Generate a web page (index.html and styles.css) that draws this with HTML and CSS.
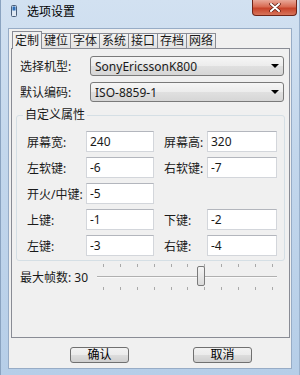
FILE: index.html
```html
<!DOCTYPE html>
<html lang="zh-CN">
<head>
    <meta charset="UTF-8">
    <title>选项设置</title>
    <link rel="stylesheet" href="styles.css">
</head>
<body>
    <div class="window">
        <div class="titlebar">
            <svg class="app-icon" width="6" height="12" viewBox="0 0 6 12">
                <rect x="0.5" y="0.5" width="5" height="11" rx="1" fill="#dfe8f2" stroke="#4a5f7a"/>
                <rect x="1.5" y="1.5" width="3" height="4" fill="#2f6fb8"/>
            </svg>
            <span class="title">选项设置</span>
            <div class="close">
                <svg width="12" height="9" viewBox="0 0 12 9">
                    <path d="M2 1 L10 8 M10 1 L2 8" stroke="#5a1a10" stroke-width="3.4" stroke-linecap="round"/>
                    <path d="M2 1 L10 8 M10 1 L2 8" stroke="#fff" stroke-width="2" stroke-linecap="round"/>
                </svg>
            </div>
        </div>

        <div class="client">
            <div class="tabs">
                <div class="tab active">定制</div>
                <div class="tab">键位</div>
                <div class="tab">字体</div>
                <div class="tab">系统</div>
                <div class="tab">接口</div>
                <div class="tab">存档</div>
                <div class="tab">网络</div>
            </div>

            <div class="panel">
                <div class="form-row">
                    <label>选择机型:</label>
                    <div class="combo"><span>SonyEricssonK800</span><i class="arrow"></i></div>
                </div>
                <div class="form-row">
                    <label>默认编码:</label>
                    <div class="combo"><span>ISO-8859-1</span><i class="arrow"></i></div>
                </div>

                <fieldset class="group">
                    <legend>自定义属性</legend>
                    <div class="grid">
                        <label>屏幕宽:</label><input type="text" value="240">
                        <label class="lbl2">屏幕高:</label><input type="text" value="320">

                        <label>左软键:</label><input type="text" value="-6">
                        <label class="lbl2">右软键:</label><input type="text" value="-7">

                        <label>开火/中键:</label><input type="text" value="-5">
                        <span></span><span></span>

                        <label>上键:</label><input type="text" value="-1">
                        <label class="lbl2">下键:</label><input type="text" value="-2">

                        <label>左键:</label><input type="text" value="-3">
                        <label class="lbl2">右键:</label><input type="text" value="-4">
                    </div>
                </fieldset>

                <div class="slider-row">
                    <label>最大帧数: 30</label>
                    <div class="slider">
                        <div class="ticks"><i></i><i></i><i></i><i></i><i></i><i></i><i></i><i></i><i></i><i></i><i></i></div>
                        <div class="track"></div>
                        <div class="ticks"><i></i><i></i><i></i><i></i><i></i><i></i><i></i><i></i><i></i><i></i><i></i></div>
                        <div class="thumb"></div>
                    </div>
                </div>
            </div>

            <div class="buttons">
                <button>确认</button>
                <button>取消</button>
            </div>
        </div>
    </div>
</body>
</html>
```

FILE: styles.css
```css
body {
    margin: 0;
    font-family: "Noto Sans", "Noto Sans CJK SC", sans-serif;
    font-size: 12px;
    color: #1a1a1a;
}
.window {
    width: 300px;
    height: 375px;
    box-sizing: border-box;
    background: linear-gradient(to bottom, #d2e1f1 0%, #c3d7ec 40%, #b6cee8 100%);
    box-shadow: inset 1px 0 0 #8aa3c0, inset -1px 0 0 #9ab1cc;
    display: flex;
    flex-direction: column;
}
.titlebar {
    height: 28px;
    flex-shrink: 0;
    display: flex;
    align-items: flex-start;
}
.app-icon {
    margin: 5px 0 0 11px;
}
.title {
    margin: 4px 0 0 10px;
    line-height: 15px;
    color: #000;
}
.close {
    margin-left: auto;
    margin-right: 3px;
    width: 45px;
    height: 16px;
    box-sizing: border-box;
    border: 1px solid #6e2418;
    border-top: none;
    border-radius: 0 0 4px 4px;
    background: linear-gradient(to bottom, #e9a899 0%, #d86a52 45%, #c7432a 55%, #d7745a 100%);
    display: flex;
    align-items: center;
    justify-content: center;
}
.client {
    margin: 0 8px;
    height: 341px;
    box-sizing: border-box;
    border: 1px solid #97acc6;
    background: #f0f0f0;
    padding: 2px 0 0 2px;
    display: flex;
    flex-direction: column;
}
.tabs {
    display: flex;
    align-items: flex-end;
    height: 17px;
    margin-left: 1px;
    position: relative;
    z-index: 1;
}
.tab {
    height: 15px;
    box-sizing: border-box;
    border: 1px solid #898c95;
    border-bottom: none;
    padding: 0 2px;
    line-height: 13px;
    background: linear-gradient(to bottom, #f3f3f3, #e2e2e2);
    margin-left: -1px;
}
.tab:first-child {
    margin-left: 0;
}
.tab.active {
    height: 18px;
    padding-top: 2px;
    margin-bottom: -1px;
    background: #f0f0f0;
}
.panel {
    height: 290px;
    box-sizing: border-box;
    margin-right: 1px;
    border: 1px solid #898c95;
    background: #f0f0f0;
    padding: 7px 4px 0 4px;
}
.form-row {
    display: flex;
    align-items: center;
    height: 20px;
    margin-bottom: 6px;
    padding: 0 1px 0 4px;
}
.form-row label {
    width: 70px;
}
.combo {
    flex: 1;
    height: 20px;
    box-sizing: border-box;
    border: 1px solid #7a7a7a;
    border-radius: 3px;
    background: linear-gradient(to bottom, #f6f6f6 0%, #ececec 50%, #e0e0e0 50%, #d6d6d6 100%);
    display: flex;
    align-items: center;
    padding: 0 4px 0 4px;
}
.combo span {
    flex: 1;
}
.arrow {
    width: 0;
    height: 0;
    border-left: 4px solid transparent;
    border-right: 4px solid transparent;
    border-top: 4px solid #000;
}
.group {
    margin: 2px 0 0;
    padding: 0 7px 4px 6px;
    border: 1px solid #d5dfe5;
    border-radius: 3px;
    min-width: 0;
}
.group legend {
    padding: 0 2px;
    line-height: 14px;
}
.grid {
    margin: 9px 0 0 4px;
    display: grid;
    grid-template-columns: 59px 68px 53px 70px;
    grid-auto-rows: 21px;
    row-gap: 5px;
    align-items: center;
}
.grid .lbl2 {
    padding-left: 10px;
}
.grid input {
    width: 100%;
    height: 21px;
    box-sizing: border-box;
    margin: 0;
    border: 1px solid #d3d6db;
    border-top-color: #b3b6bd;
    padding: 0 3px;
    font: inherit;
    color: #1a1a1a;
    background: #fff;
}
.slider-row {
    display: flex;
    align-items: center;
    height: 30px;
    margin-top: 1px;
    padding-left: 4px;
}
.slider-row label {
    width: 77px;
}
.slider {
    position: relative;
    width: 180px;
    height: 30px;
    box-sizing: border-box;
    padding: 2px 0;
    display: flex;
    flex-direction: column;
    justify-content: space-between;
}
.ticks {
    display: flex;
    justify-content: space-between;
    padding: 0 4px 0 6px;
    height: 3px;
}
.ticks i {
    width: 1px;
    height: 3px;
    background: #a9a9a9;
}
.track {
    height: 1px;
    background: #b0b0b0;
    border-bottom: 1px solid #fafafa;
}
.thumb {
    position: absolute;
    left: 100px;
    top: 4px;
    width: 8px;
    height: 20px;
    box-sizing: border-box;
    border: 1px solid #7a7a7a;
    border-radius: 2px;
    background: linear-gradient(to bottom, #f5f5f5, #dadada);
}
.buttons {
    display: flex;
    margin-top: 9px;
    padding-left: 59px;
    gap: 64px;
}
.buttons button {
    width: 59px;
    height: 16px;
    box-sizing: border-box;
    padding: 0;
    border: 1px solid #707070;
    border-radius: 3px;
    background: linear-gradient(to bottom, #f2f2f2 0%, #ebebeb 50%, #dddddd 50%, #cfcfcf 100%);
    font: inherit;
    line-height: 14px;
    color: #000;
}
```
